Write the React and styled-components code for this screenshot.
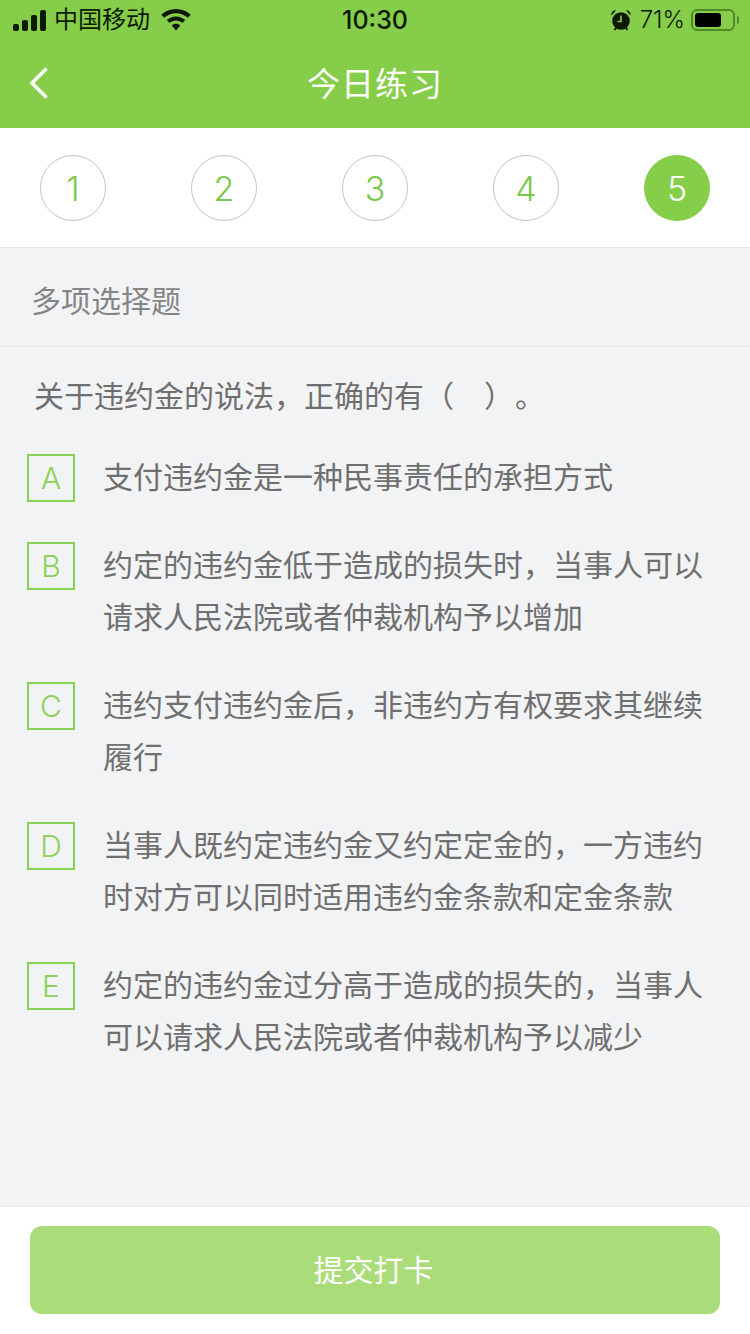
import styled, { createGlobalStyle } from 'styled-components';

const GlobalStyle = createGlobalStyle`
    html, body {
        margin: 0;
        padding: 0;
        background: #f2f3f5;
    }
    * {
        box-sizing: border-box;
    }
`;

const FONT = `"Inter", "Liberation Sans", "Noto Sans CJK SC", sans-serif`;
const GREEN = '#86cd4a';

const Page = styled.div`
    width: 750px;
    height: 1334px;
    display: flex;
    flex-direction: column;
    overflow: hidden;
    font-family: ${FONT};
    background: #f2f3f5;
`;

const Header = styled.header`
    background: ${GREEN};
    height: 128px;
    display: flex;
    flex-direction: column;
`;

const StatusBar = styled.div`
    height: 40px;
    padding: 0 11px 0 13px;
    display: grid;
    grid-template-columns: 1fr auto 1fr;
    align-items: center;
    color: #0c1a05;
`;

const StatusLeft = styled.div`
    display: flex;
    align-items: center;
`;

const StatusRight = styled.div`
    display: flex;
    align-items: center;
    justify-content: flex-end;
`;

const Carrier = styled.span`
    font-size: 24px;
    margin: 0 11px 0 8px;
    line-height: 40px;
`;

const Clock = styled.span`
    font-size: 25px;
    font-weight: 500;
    line-height: 40px;
    margin-right: 2px;
`;

const Percent = styled.span`
    font-size: 24px;
    font-weight: 300;
    margin: 0 6px 0 9px;
    line-height: 40px;
`;

const NavBar = styled.div`
    flex: 1;
    position: relative;
    display: flex;
    align-items: center;
    justify-content: center;
    padding-bottom: 4px;
`;

const BackButton = styled.div`
    position: absolute;
    left: 28px;
    top: 26px;
    display: flex;
`;

const NavTitle = styled.h1`
    margin: 0;
    color: #fff;
    font-size: 33px;
    font-weight: 400;
    letter-spacing: 1px;
`;

const Steps = styled.div`
    height: 120px;
    background: #fff;
    border-bottom: 1px solid #e8e9eb;
    padding: 27px 40px 0;
    display: flex;
    justify-content: space-between;
    align-items: flex-start;
`;

const Step = styled.div`
    width: 66px;
    height: 66px;
    border-radius: 50%;
    display: flex;
    align-items: center;
    justify-content: center;
    font-size: 34px;
    font-weight: 350;
    color: ${({ $active }) => ($active ? '#fff' : '#7cc74a')};
    background: ${({ $active }) => ($active ? GREEN : '#fff')};
    border: 1px solid ${({ $active }) => ($active ? GREEN : '#c4c4c4')};
`;

const SectionHead = styled.div`
    height: 99px;
    padding: 4px 31px 0;
    display: flex;
    align-items: center;
    border-bottom: 1px solid #e6e7e9;
    color: #858585;
    font-size: 30px;
`;

const Main = styled.main`
    flex: 1;
    padding: 24px 0 0 27px;
`;

const Question = styled.p`
    margin: 0 0 30px 7px;
    color: #6f6f6f;
    font-size: 30px;
    line-height: 50px;
    white-space: pre;
`;

const Blank = styled.span`
    display: inline-block;
    width: 30px;
`;

const Stop = styled.span`
    margin-left: 16px;
`;

const OptionList = styled.div`
    display: flex;
    flex-direction: column;
    gap: 36px;
`;

const Option = styled.div`
    display: flex;
    align-items: flex-start;
`;

const OptionKey = styled.div`
    flex: none;
    width: 48px;
    height: 48px;
    margin-top: 3px;
    border: 2px solid #8ccf52;
    display: flex;
    align-items: center;
    justify-content: center;
    color: #8ed156;
    font-size: 30px;
    font-weight: 350;
`;

const OptionText = styled.div`
    margin-left: 28px;
    width: 610px;
    color: #6f6f6f;
    font-size: 30px;
    line-height: 52px;
`;

const Footer = styled.footer`
    height: 128px;
    background: #fff;
    border-top: 1px solid #e8e9eb;
    padding: 19px 30px 0;
`;

const SubmitButton = styled.div`
    height: 88px;
    border-radius: 12px;
    background: #aadc7a;
    color: #fff;
    font-size: 30px;
    padding: 0 3px 4px 0;
    display: flex;
    align-items: center;
    justify-content: center;
`;

const Battery = styled.div`
    width: 44px;
    height: 22px;
    border: 2px solid #4f8a2a;
    border-radius: 6px;
    padding: 2px;
    display: flex;
`;

const BatteryFill = styled.div`
    width: 71%;
    border-radius: 3px;
    background: #000;
`;

const BatteryCap = styled.div`
    width: 2px;
    height: 8px;
    margin-left: 2px;
    border-radius: 0 2px 2px 0;
    background: #4f8a2a;
`;

const SignalIcon = () => (
    <svg width="33" height="21" viewBox="0 0 33 21" fill="#0c1a05">
        <rect x="0" y="14" width="6" height="7" rx="2" />
        <rect x="9" y="10" width="6" height="11" rx="2" />
        <rect x="18" y="5" width="6" height="16" rx="2" />
        <rect x="27" y="0" width="6" height="21" rx="2" />
    </svg>
);

const WifiIcon = () => (
    <svg width="30" height="22" viewBox="0 0 30 22" fill="#0c1a05">
        <path d="M15 0C9.2 0 4.1 2.2.3 5.8l2.9 3C6.2 5.900 10.400 4.200 15 4.200s8.800 1.700 11.800 4.600l2.900-3C25.900 2.200 20.800 0 15 0z" />
        <path d="M15 7.400c-3.600 0-6.900 1.400-9.300 3.700l2.900 3c1.700-1.600 3.900-2.500 6.400-2.500s4.700.9 6.400 2.500l2.900-3c-2.400-2.300-5.700-3.700-9.300-3.700z" />
        <path d="M15 14.800c-1.700 0-3.200.6-4.300 1.700L15 21.500l4.300-5c-1.100-1.100-2.600-1.700-4.300-1.700z" />
    </svg>
);

const AlarmIcon = () => (
    <svg width="20" height="22" viewBox="0 0 20 22" fill="#0c1a05">
        <circle cx="10" cy="12" r="8.800" />
        <path d="M0.500 6.500C0 3.500 2 1 5 1.200zM19.500 6.500C20 3.500 18 1 15 1.200z" />
        <path d="M5 19l-1.500 2M15 19l1.500 2" stroke="#0c1a05" strokeWidth="2" />
        <path d="M10 6.500V12.500H6.500" stroke={GREEN} strokeWidth="1.600" fill="none" />
    </svg>
);

const BackIcon = () => (
    <svg width="22" height="34" viewBox="0 0 22 34" fill="none" stroke="#fff" strokeWidth="3.600">
        <path d="M18.500 2.500L4 17l14.500 14.500" />
    </svg>
);

const STEPS = [1, 2, 3, 4, 5];

const OPTIONS = [
    { key: 'A', text: '支付违约金是一种民事责任的承担方式' },
    { key: 'B', text: '约定的违约金低于造成的损失时，当事人可以请求人民法院或者仲裁机构予以增加' },
    { key: 'C', text: '违约支付违约金后，非违约方有权要求其继续履行' },
    { key: 'D', text: '当事人既约定违约金又约定定金的，一方违约时对方可以同时适用违约金条款和定金条款' },
    { key: 'E', text: '约定的违约金过分高于造成的损失的，当事人可以请求人民法院或者仲裁机构予以减少' },
];

const App = () => {
    return (
        <Page>
            <GlobalStyle />
            <Header>
                <StatusBar>
                    <StatusLeft>
                        <SignalIcon />
                        <Carrier>中国移动</Carrier>
                        <WifiIcon />
                    </StatusLeft>
                    <Clock>10:30</Clock>
                    <StatusRight>
                        <AlarmIcon />
                        <Percent>71%</Percent>
                        <Battery>
                            <BatteryFill />
                        </Battery>
                        <BatteryCap />
                    </StatusRight>
                </StatusBar>
                <NavBar>
                    <BackButton>
                        <BackIcon />
                    </BackButton>
                    <NavTitle>今日练习</NavTitle>
                </NavBar>
            </Header>
            <Steps>
                {STEPS.map((n) => (
                    <Step key={n} $active={n === 5}>{n}</Step>
                ))}
            </Steps>
            <SectionHead>多项选择题</SectionHead>
            <Main>
                <Question>关于违约金的说法，正确的有（<Blank />）<Stop>。</Stop></Question>
                <OptionList>
                    {OPTIONS.map((item) => (
                        <Option key={item.key}>
                            <OptionKey>{item.key}</OptionKey>
                            <OptionText>{item.text}</OptionText>
                        </Option>
                    ))}
                </OptionList>
            </Main>
            <Footer>
                <SubmitButton>提交打卡</SubmitButton>
            </Footer>
        </Page>
    );
};

export default App;
